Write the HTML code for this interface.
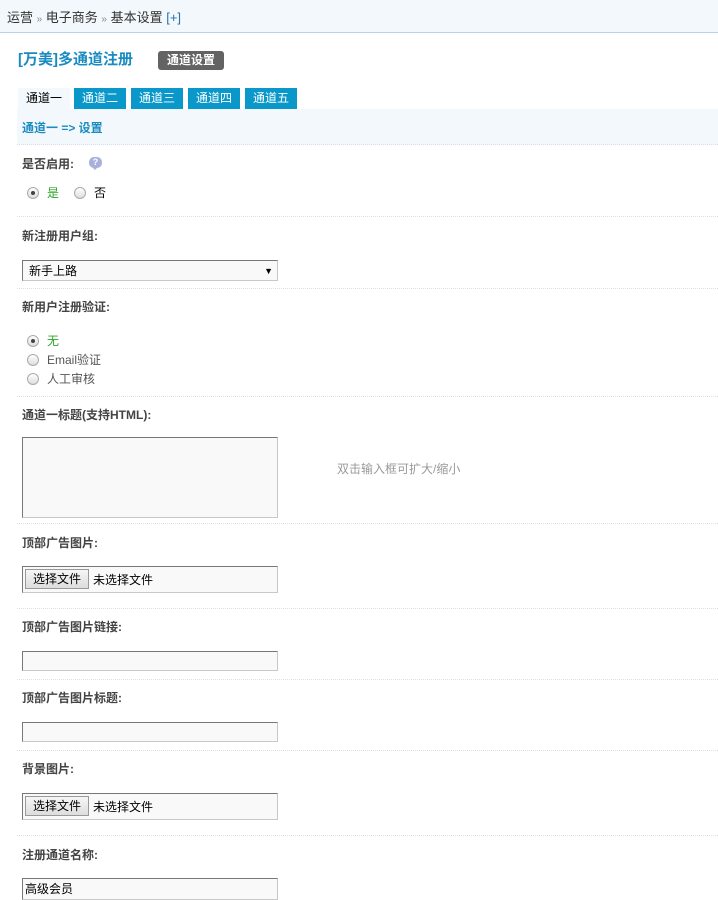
<!DOCTYPE html>
<html><head><meta charset="utf-8"><style>
*{margin:0;padding:0;box-sizing:border-box}
body{width:718px;height:897px;overflow:hidden;background:#fff;position:relative;font-family:"Liberation Sans","Noto Sans CJK SC",sans-serif;font-size:12px;color:#333}
.a{position:absolute;white-space:nowrap;line-height:16px}
.lbl{position:absolute;left:22px;font-weight:bold;color:#444;line-height:16px}
.sep{position:absolute;left:17px;right:0;border-top:1px dotted #e0e0e0;height:0}
.inp{position:absolute;left:22px;width:256px;background:#f9f9f9;border:1px solid #c8c8c8;border-top-color:#777;border-left-color:#777}
.tab{position:absolute;top:88px;height:21px;width:52px;background:#0a97c9;color:#fff;text-align:center;line-height:20px}
.rad{position:absolute;width:12px;height:12px;border-radius:50%;border:1px solid #aaa;background:linear-gradient(#fff,#ddd)}
.rad.on::after{content:"";position:absolute;left:3px;top:3px;width:4px;height:4px;border-radius:50%;background:#444}
.fbtn{position:absolute;left:2px;top:2px;width:64px;height:20px;border:1px solid #999;background:linear-gradient(#f6f6f6,#ddd);text-align:center;line-height:18px;color:#000}
</style></head><body>
<div style="position:absolute;left:0;top:0;width:718px;height:33px;background:#f2f8fc;border-bottom:1px solid #b9d3e6"></div>
<div class="a" style="left:7px;top:10px;color:#333;font-size:13px">运营 <span style="color:#888;font-size:10px">»</span> 电子商务 <span style="color:#888;font-size:10px">»</span> 基本设置 <span style="color:#2a6fa8">[+]</span></div>
<div class="a" style="left:18px;top:51px;font-size:15px;font-weight:bold;color:#1a8bc0;line-height:18px">[万美]多通道注册</div>
<div class="a" style="left:158px;top:51px;width:66px;height:19px;background:#636363;border-radius:3px;color:#fff;font-weight:bold;text-align:center;line-height:19px">通道设置</div>
<div class="tab" style="left:18px;background:#f2f8fc;color:#000">通道一</div>
<div class="tab" style="left:74px">通道二</div>
<div class="tab" style="left:131px">通道三</div>
<div class="tab" style="left:188px">通道四</div>
<div class="tab" style="left:245px">通道五</div>
<div style="position:absolute;left:17px;top:109px;width:701px;height:36px;background:#f2f8fc;border-bottom:1px dotted #dde"></div>
<div class="a" style="left:22px;top:120px;font-weight:bold;color:#1a8bc0">通道一 =&gt; 设置</div>

<div class="lbl" style="top:156px">是否启用:</div>
<div style="position:absolute;left:89px;top:157px;width:13px;height:11px;border-radius:5px;background:#a9b0dc;color:#fff;font-size:9px;font-weight:bold;text-align:center;line-height:11px">?</div>
<div style="position:absolute;left:92px;top:167px;width:0;height:0;border-left:3px solid transparent;border-right:3px solid transparent;border-top:3px solid #a9b0dc"></div>
<div class="rad on" style="left:27px;top:187px"></div><div class="a" style="left:47px;top:185px;color:#2aa52a">是</div>
<div class="rad" style="left:74px;top:187px"></div><div class="a" style="left:94px;top:185px;color:#000">否</div>
<div class="sep" style="top:216px"></div>

<div class="lbl" style="top:228px">新注册用户组:</div>
<div class="inp" style="top:260px;height:21px"><span class="a" style="left:6px;top:2px;color:#000">新手上路</span><span class="a" style="right:4px;top:2px;font-size:9px;color:#000">▼</span></div>
<div class="sep" style="top:288px"></div>

<div class="lbl" style="top:299px">新用户注册验证:</div>
<div class="rad on" style="left:27px;top:335px"></div><div class="a" style="left:47px;top:333px;color:#2aa52a">无</div>
<div class="rad" style="left:27px;top:354px"></div><div class="a" style="left:47px;top:352px;color:#555">Email验证</div>
<div class="rad" style="left:27px;top:373px"></div><div class="a" style="left:47px;top:371px;color:#555">人工审核</div>
<div class="sep" style="top:396px"></div>

<div class="lbl" style="top:407px">通道一标题(支持HTML):</div>
<div class="inp" style="top:437px;height:81px"></div>
<div class="a" style="left:337px;top:461px;color:#999">双击输入框可扩大/缩小</div>
<div class="sep" style="top:523px"></div>

<div class="lbl" style="top:535px">顶部广告图片:</div>
<div class="inp" style="top:566px;height:27px"><div class="fbtn">选择文件</div><span class="a" style="left:70px;top:5px;color:#000">未选择文件</span></div>
<div class="sep" style="top:608px"></div>

<div class="lbl" style="top:619px">顶部广告图片链接:</div>
<div class="inp" style="top:651px;height:20px"></div>
<div class="sep" style="top:679px"></div>

<div class="lbl" style="top:690px">顶部广告图片标题:</div>
<div class="inp" style="top:722px;height:20px"></div>
<div class="sep" style="top:750px"></div>

<div class="lbl" style="top:761px">背景图片:</div>
<div class="inp" style="top:793px;height:27px"><div class="fbtn">选择文件</div><span class="a" style="left:70px;top:5px;color:#000">未选择文件</span></div>
<div class="sep" style="top:835px"></div>

<div class="lbl" style="top:847px">注册通道名称:</div>
<div class="inp" style="top:878px;height:22px"><span class="a" style="left:2px;top:2px;color:#000">高级会员</span></div>
</body></html>
